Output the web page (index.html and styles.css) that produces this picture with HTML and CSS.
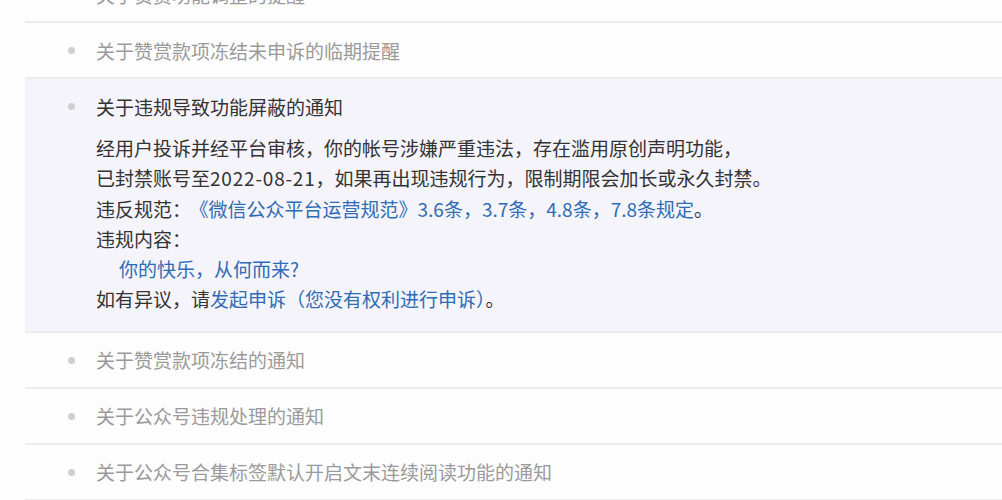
FILE: index.html
```html
<!DOCTYPE html>
<html lang="zh-CN">
<head>
<meta charset="utf-8">
<link rel="stylesheet" href="styles.css">
</head>
<body>
<ul class="list">
  <li class="item"><div class="title"><span class="dot"></span>关于赞赏功能调整的提醒</div></li>
  <li class="item"><div class="title"><span class="dot"></span>关于赞赏款项冻结未申诉的临期提醒</div></li>
  <li class="item active">
    <div class="title"><span class="dot"></span>关于违规导致功能屏蔽的通知</div>
    <div class="body">
      <p>经用户投诉并经平台审核，你的帐号涉嫌严重违法，存在滥用原创声明功能，</p>
      <p>已封禁账号至<span class="num">2022-08-21</span>，如果再出现违规行为，限制期限会加长或永久封禁。</p>
      <p>违反规范：<a class="link spaced">《微信公众平台运营规范》3.6条，3.7条，4.8条，7.8条规定</a>。</p>
      <p>违规内容：</p>
      <p class="quote"><a class="link">你的快乐，从何而来?</a></p>
      <p>如有异议，请<a class="link">发起申诉（您没有权利进行申诉）</a>。</p>
    </div>
  </li>
  <li class="item"><div class="title"><span class="dot"></span>关于赞赏款项冻结的通知</div></li>
  <li class="item"><div class="title"><span class="dot"></span>关于公众号违规处理的通知</div></li>
  <li class="item"><div class="title"><span class="dot"></span>关于公众号合集标签默认开启文末连续阅读功能的通知</div></li>
</ul>
</body>
</html>
```

FILE: styles.css
```css
html, body {
  margin: 0;
  padding: 0;
  background: #fdfdfd;
  overflow: hidden;
  height: 500px;
}
body {
  font-family: "Noto Sans CJK SC", "Microsoft YaHei", sans-serif;
  font-size: 19px;
  color: #333;
}
.list {
  list-style: none;
  margin: -33px 0 0 25px;
  padding: 0;
}
.item {
  border-bottom: 2px solid #ececec;
}
.title {
  display: flex;
  align-items: center;
  height: 54px;
  padding-left: 71px;
  position: relative;
  color: #9a9a9a;
}
.dot {
  position: absolute;
  left: 43px;
  top: 24px;
  width: 7px;
  height: 7px;
  border-radius: 50%;
  background: #cfcfcf;
}
.active {
  background: #f4f4fa;
  padding-bottom: 16px;
}
.active .title {
  color: #333;
}
.body {
  padding-left: 71px;
}
.body p {
  margin: 0;
  line-height: 30.3px;
  color: #333;
}
.body .quote {
  padding-left: 23px;
}
.num {
  letter-spacing: 0.8px;
}
.link {
  color: #2f6cb5;
}
.spaced {
  margin-left: 8px;
}
```
